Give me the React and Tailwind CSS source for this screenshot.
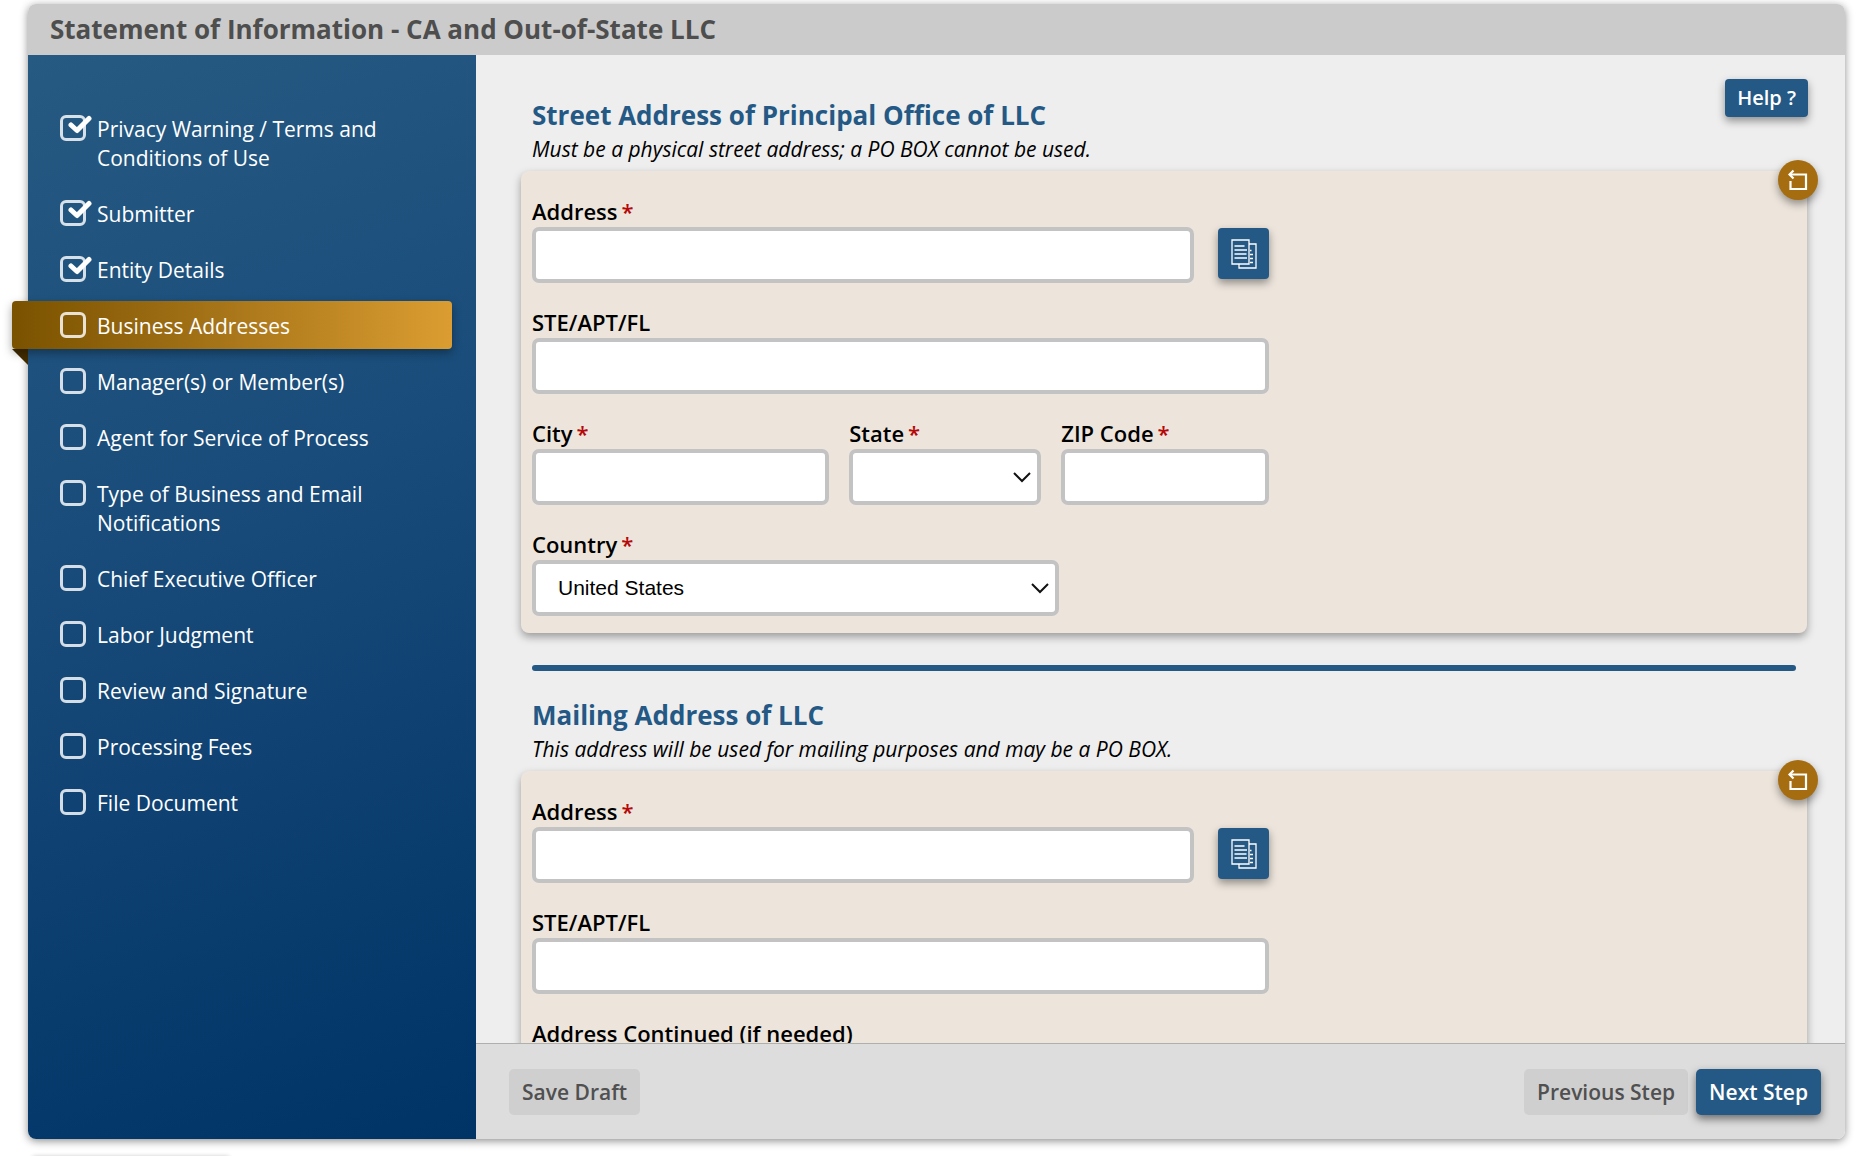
import { useState } from "react";

const STEPS = [
  { label: "Privacy Warning / Terms and Conditions of Use", done: true },
  { label: "Submitter", done: true },
  { label: "Entity Details", done: true },
  { label: "Business Addresses", current: true },
  { label: "Manager(s) or Member(s)" },
  { label: "Agent for Service of Process" },
  { label: "Type of Business and Email Notifications" },
  { label: "Chief Executive Officer" },
  { label: "Labor Judgment" },
  { label: "Review and Signature" },
  { label: "Processing Fees" },
  { label: "File Document" },
];

const FIELD = "block h-14 w-full rounded-[7px] border-4 border-[#c3c3c4] bg-white px-[22px] font-['Liberation_Sans',sans-serif] text-[21px] text-black";

function StepBox({ done }) {
  return (
    <svg width="34" height="26" viewBox="0 0 34 26" fill="none" className="shrink-0" aria-hidden="true">
      <rect x="1.5" y="1.5" width="23" height="23" rx="4.5" stroke="#fff" strokeOpacity="0.82" strokeWidth="3" />
      {done && <path d="M11 10l6 5.500L29 3.500" stroke="#fff" strokeWidth="5" strokeLinecap="round" strokeLinejoin="round" />}
    </svg>
  );
}

function Step({ step }) {
  return (
    <li className="relative">
      {step.current && (
        <>
          <span className="absolute -left-4 bottom-[3px] h-4 w-4 bg-[#432d00] [clip-path:polygon(0_0,100%_0,100%_100%)]" />
          <span className="absolute -left-4 right-6 -top-[11px] bottom-[19px] rounded bg-linear-to-r from-[#7a5200] to-[#db9d31] shadow-[0_4px_10px_rgba(0,0,0,0.35)]" />
        </>
      )}
      <a href="#step" className="relative flex items-start pl-8 pr-16 pb-[27px] text-[21px] leading-[29px] text-white"
        aria-current={step.current ? "step" : undefined}>
        <StepBox done={step.done} />
        <span className="pl-[3px]">{step.label}</span>
      </a>
    </li>
  );
}

function Label({ htmlFor, required, children }) {
  return (
    <label htmlFor={htmlFor} className="block text-[22px] font-semibold leading-[31px] text-black">
      {children}
      {required && <span className="pl-1 text-[#b50909]">*</span>}
    </label>
  );
}

function TextField({ id, label, required }) {
  return (
    <div>
      <Label htmlFor={id} required={required}>{label}</Label>
      <input id={id} type="text" className={FIELD} />
    </div>
  );
}

function SelectField({ id, label, required, options }) {
  return (
    <div>
      <Label htmlFor={id} required={required}>{label}</Label>
      <div className="relative">
        <select id={id} className={`${FIELD} appearance-none`}>
          {options.map((o) => <option key={o}>{o}</option>)}
        </select>
        <svg width="18" height="11" viewBox="0 0 18 11" fill="none" className="pointer-events-none absolute right-[10px] top-[23px]" aria-hidden="true">
          <path d="M1 1l8 8 8-8" stroke="#111" strokeWidth="2" />
        </svg>
      </div>
    </div>
  );
}

function CopyIcon() {
  return (
    <svg width="26" height="30" viewBox="0 0 26 30" fill="none" stroke="#fff" strokeWidth="1.3" aria-hidden="true">
      <path d="M1 1h17v24H1z" />
      <path d="M18 5h7v24H8v-4" />
      <path d="M3.5 7h10M3.5 11h12.5M3.5 15h12M3.5 19h12.5" />
      <path d="M19 11.5h1.5M19 15.5h3M19 19.5h3M19 23.5h3" />
    </svg>
  );
}

function ResetIcon() {
  return (
    <svg width="20" height="22" viewBox="0 0 20 22" fill="none" stroke="#fff" strokeWidth="2.2" aria-hidden="true">
      <path d="M1.5 5.5H18V20H2.5v-8" />
      <path d="M5.5 1.5l-4 4 4 4" />
    </svg>
  );
}

function AddressSection({ id, title, note, children }) {
  return (
    <section>
      <h2 className="px-[11px] text-[26px] font-bold leading-[34px] text-[#255985]">{title}</h2>
      <p className="px-[11px] pt-[2px] pb-[7px] text-[21px] italic leading-[30px] text-black">{note}</p>
      <div className="relative rounded-lg bg-[#ede5dc] px-[11px] pt-[25px] pb-[17px] shadow-[0_4px_8px_rgba(0,0,0,0.35)]">
        <button type="button" aria-label={`Reset ${title}`}
          className="absolute -right-[11px] -top-[11px] grid h-10 w-10 place-items-center rounded-full bg-[#a56d10] shadow-[0_4px_8px_rgba(0,0,0,0.4)]">
          <ResetIcon />
        </button>
        <div className="flex w-7/12 flex-col gap-6">
          <div className="flex items-end gap-6">
            <div className="flex-1"><TextField id={`${id}-address`} label="Address" required /></div>
            <button type="button" aria-label="Copy address"
              className="mb-1 grid h-[51px] w-[51px] place-items-center rounded bg-[#255985] shadow-[0_4px_8px_rgba(0,0,0,0.4)]">
              <CopyIcon />
            </button>
          </div>
          <TextField id={`${id}-unit`} label="STE/APT/FL" />
          {children}
        </div>
      </div>
    </section>
  );
}

export default function App() {
  const [saved, setSaved] = useState(false);

  return (
    <div className="flex h-screen flex-col gap-[17px] overflow-hidden bg-white pt-1 pl-7 pr-[29px] font-['Open_Sans',sans-serif]">
      <div className="flex h-[calc(100vh-21px)] shrink-0 flex-col rounded-lg shadow-[0_2px_8px_rgba(0,0,0,0.45)]">
        <header className="rounded-t-lg bg-[#cbcbcb] px-[22px] py-2">
          <h1 className="text-[26px] font-bold leading-[35px] text-[#4e4e4e]">Statement of Information - CA and Out-of-State LLC</h1>
        </header>
        <div className="flex min-h-0 flex-1">
          <nav aria-label="Filing steps" className="w-[448px] shrink-0 rounded-bl-lg bg-linear-160 from-[#265a82] via-[#194c7a] via-40% to-[#003366] pt-[60px]">
            <ul>
              {STEPS.map((s) => <Step key={s.label} step={s} />)}
            </ul>
          </nav>

          <div className="flex min-w-0 flex-1 flex-col">
            <main className="relative min-h-0 flex-1 overflow-y-auto bg-[#eeeeee] pt-[43px] pr-[38px] pl-[45px] [scrollbar-width:none]">
              <button type="button"
                className="absolute right-[37px] top-6 rounded bg-[#255985] px-3 py-1 text-[20px] font-semibold leading-[30px] text-white shadow-[0_4px_8px_rgba(0,0,0,0.4)]">
                Help ?
              </button>
              <AddressSection id="street" title="Street Address of Principal Office of LLC"
                note="Must be a physical street address; a PO BOX cannot be used.">
                <div className="grid grid-cols-[297fr_192fr_208fr] gap-5">
                  <TextField id="street-city" label="City" required />
                  <SelectField id="street-state" label="State" required options={["", "CA", "NV", "OR"]} />
                  <TextField id="street-zip" label="ZIP Code" required />
                </div>
                <div className="w-5/7">
                  <SelectField id="street-country" label="Country" required options={["United States", "Canada", "Mexico"]} />
                </div>
              </AddressSection>
              <hr className="mx-[11px] mt-8 mb-[27px] h-[6px] rounded-full border-0 bg-[#255985]" />
              <AddressSection id="mailing" title="Mailing Address of LLC"
                note="This address will be used for mailing purposes and may be a PO BOX.">
                <TextField id="mailing-continued" label="Address Continued (if needed)" />
              </AddressSection>
            </main>
            <footer className="flex items-center gap-2 rounded-br-lg border-t border-[#adb0ad] bg-[#dddddd] pt-[25px] pr-6 pb-6 pl-[33px] text-[21px] font-semibold leading-[30px]">
              <button type="button" onClick={() => setSaved(true)} disabled={saved}
                className="mr-auto rounded-[5px] bg-[#cfcfcf] px-[13px] py-2 text-[#505050]">Save Draft</button>
              <button type="button" className="rounded-[5px] bg-[#cfcfcf] px-[13px] py-2 text-[#505050]">Previous Step</button>
              <button type="button" className="rounded-[5px] bg-[#255985] px-[13px] py-2 text-white shadow-[0_4px_8px_rgba(0,0,0,0.5)]">Next Step</button>
            </footer>
          </div>
        </div>
      </div>
      <div className="ml-1 h-10 w-[198px] shrink-0 rounded bg-[#dddddd] shadow-[0_0_4px_rgba(0,0,0,0.2)]" />
    </div>
  );
}
